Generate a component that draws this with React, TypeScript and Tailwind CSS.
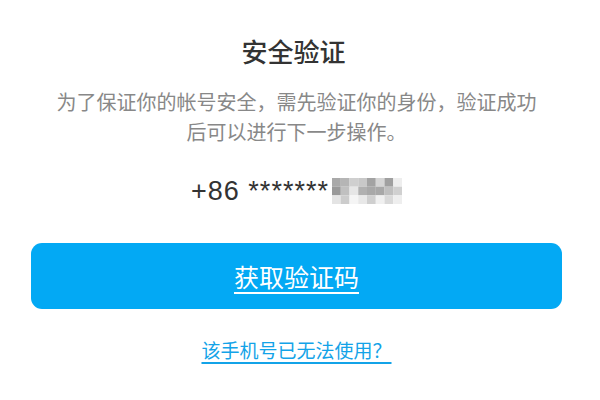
import React from "react";

const cjk = { fontFamily: '"Noto Sans CJK SC", "Noto Sans", sans-serif' };

const mosaic = [
  ["#a9a9a9", "#b5b5b5", "#cfcfcf", "#c8c8c8", "#a3a3a3", "#d5d5d5", "#a0a0a0", "#eeeeee"],
  ["#999999", "#c0c0c0", "#e6e6e6", "#b0b0b0", "#a8a8a8", "#a8a8a8", "#bfbfbf", "#d0d0d0"],
  ["#e4e4e4", "#cccccc", "#f5f5f5", "#e8e8e8", "#cfcfcf", "#f0f0f0", "#d9d9d9", "#eeeeee"],
];

function Mosaic() {
  return (
    <svg width="70" height="26" viewBox="0 0 70 26" className="block">
      {mosaic.map((row, r) =>
        row.map((c, i) => (
          <rect key={`${r}-${i}`} x={i * 8.75} y={r * 8.67} width="8.8" height="8.7" fill={c} />
        ))
      )}
    </svg>
  );
}

export default function App() {
  return (
    <div className="w-[600px] h-[400px] bg-white flex flex-col items-center pl-[31px] pr-[38px] overflow-hidden" style={cjk}>
      <div className="pt-[33px] h-[69px] text-[26px] leading-[36px] font-medium text-[#333333] -translate-x-[3px]">安全验证</div>
      <p className="mt-[18px] text-[20px] leading-[30px] text-[#888888] text-center whitespace-nowrap">
        为了保证你的帐号安全，需先验证你的身份，验证成功
        <br />
        后可以进行下一步操作。
      </p>
      <div className="mt-[28px] h-[32px] flex items-center gap-[3px] text-[#333333]">
        <span className="text-[27px] leading-[32px] tracking-[1px]" style={{ fontFamily: '"Liberation Sans", Arial, sans-serif' }}>
          +86 *******
        </span>
        <Mosaic />
      </div>
      <button className="mt-[36px] w-full h-[66px] rounded-[11px] bg-[#03a9f4] flex items-center justify-center">
        <span className="text-white text-[25px] leading-[32px] underline underline-offset-[5px] decoration-[1.5px]">获取验证码</span>
      </button>
      <a className="mt-[27px] text-[19px] leading-[28px] text-[#13a3e8] underline underline-offset-[4px] decoration-[1.5px]">
        该手机号已无法使用？
      </a>
    </div>
  );
}
